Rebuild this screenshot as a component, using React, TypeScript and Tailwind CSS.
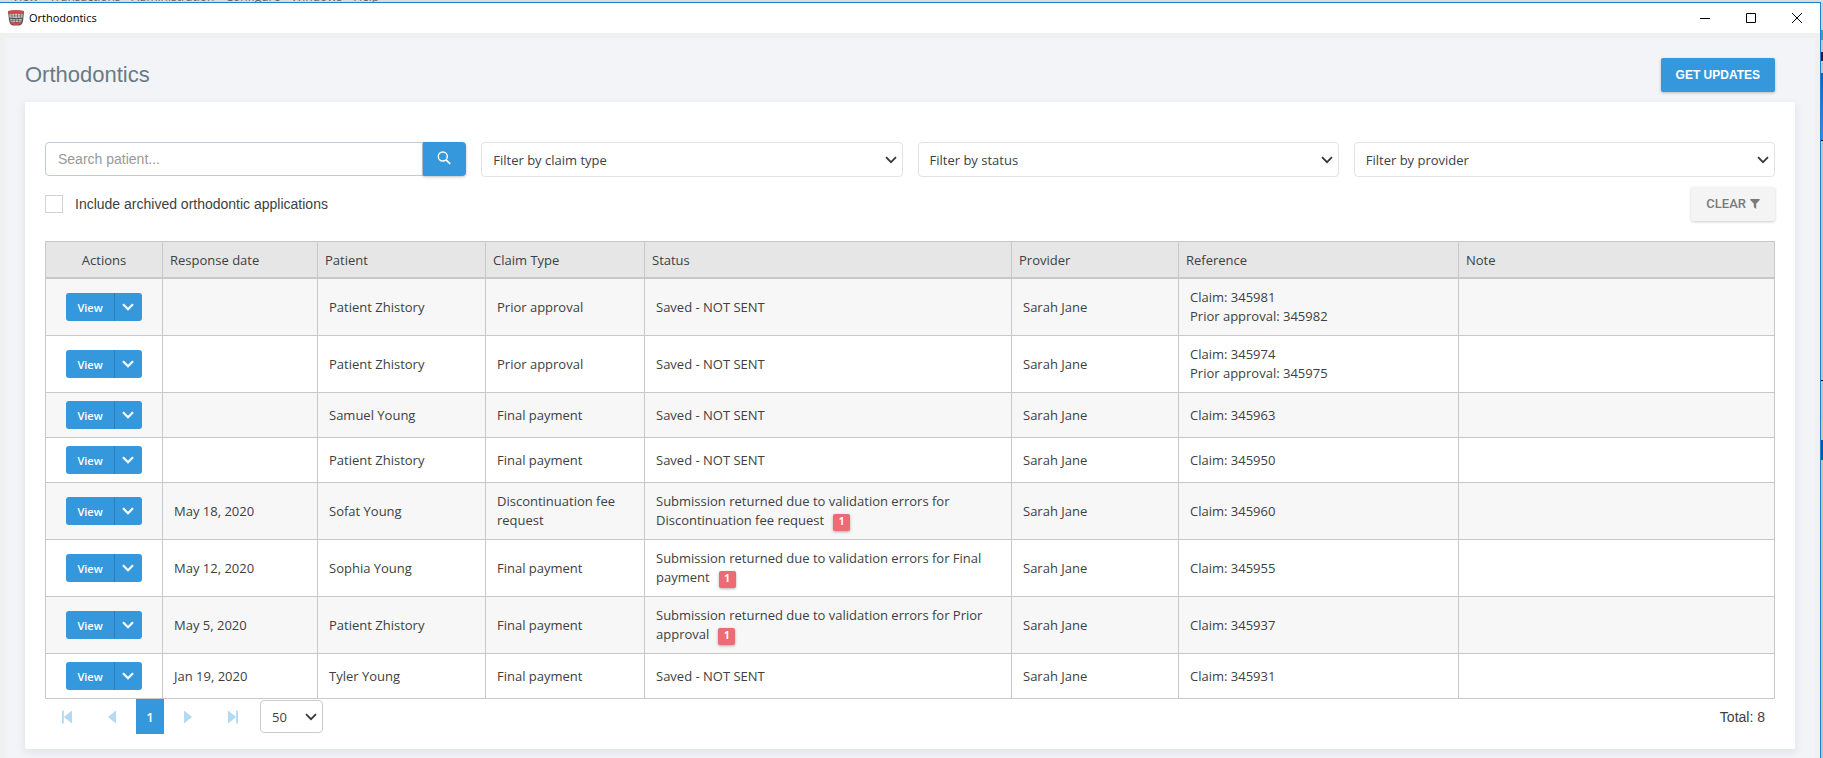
import type { ReactNode } from "react";

type Row = {
  date: string;
  patient: string;
  claim: string;
  status: string;
  errors?: number;
  reference: string[];
};

const rows: Row[] = [
  { date: "", patient: "Patient Zhistory", claim: "Prior approval", status: "Saved - NOT SENT", reference: ["Claim: 345981", "Prior approval: 345982"] },
  { date: "", patient: "Patient Zhistory", claim: "Prior approval", status: "Saved - NOT SENT", reference: ["Claim: 345974", "Prior approval: 345975"] },
  { date: "", patient: "Samuel Young", claim: "Final payment", status: "Saved - NOT SENT", reference: ["Claim: 345963"] },
  { date: "", patient: "Patient Zhistory", claim: "Final payment", status: "Saved - NOT SENT", reference: ["Claim: 345950"] },
  { date: "May 18, 2020", patient: "Sofat Young", claim: "Discontinuation fee request", status: "Submission returned due to validation errors for Discontinuation fee request", errors: 1, reference: ["Claim: 345960"] },
  { date: "May 12, 2020", patient: "Sophia Young", claim: "Final payment", status: "Submission returned due to validation errors for Final payment", errors: 1, reference: ["Claim: 345955"] },
  { date: "May 5, 2020", patient: "Patient Zhistory", claim: "Final payment", status: "Submission returned due to validation errors for Prior approval", errors: 1, reference: ["Claim: 345937"] },
  { date: "Jan 19, 2020", patient: "Tyler Young", claim: "Final payment", status: "Saved - NOT SENT", reference: ["Claim: 345931"] },
];

const headers = [
  { label: "Actions", className: "w-[117px] text-center" },
  { label: "Response date", className: "w-[155px] text-left" },
  { label: "Patient", className: "w-[168px] text-left" },
  { label: "Claim Type", className: "w-[159px] text-left" },
  { label: "Status", className: "w-[367px] text-left" },
  { label: "Provider", className: "w-[167px] text-left" },
  { label: "Reference", className: "w-[280px] text-left" },
  { label: "Note", className: "text-left" },
];

const menus = ["View", "Transactions", "Administration", "Configure", "Windows", "Help"];

function Chevron({ className }: { className: string }) {
  return (
    <svg viewBox="0 0 12 8" className={className} fill="none" stroke="currentColor" aria-hidden="true">
      <path d="M1 1.2 6 6.2l5-5" />
    </svg>
  );
}

function AppIcon() {
  return (
    <svg viewBox="0 0 16 16" className="h-4 w-4" aria-hidden="true">
      <path d="M0 1Q8-.5 16 1l-.8 9q-.7 5-4 5.500H5Q1.700 15 1 10Z" fill="#57504f" />
      <path d="M.2.900Q8-.5 15.800.900V4.500Q8 2.800.4 4.500Z" fill="#d8464c" />
      <path d="M2.200 11.500q6 2 11.600 0l-1 2.500Q8 15.800 3.200 14Z" fill="#cf4e54" />
      <path d="M1 4.500Q8 3 15 4.500L14.500 7.500Q8 8.300 1.500 7.500Z" fill="#d5d2d0" />
      <path d="M2 8.800q6 .8 12 0l-.5 2.700q-5.500 1.200-11 0Z" fill="#c9c5c3" />
      <path d="M4 4v3.500M6.700 3.700v4M9.500 3.700v4M12.300 4v3.500M4.700 9v2.500M7.500 9.300V12M10.500 9.300V12" stroke="#4a4646" strokeWidth=".6" />
      <path d="M1 5.900h14M2 10.300h12" stroke="#5e5756" strokeWidth=".6" />
    </svg>
  );
}

function Filter({ id, label }: { id: string; label: string }) {
  return (
    <div className="relative">
      <select id={id} aria-label={label} className="block h-[35px] w-full appearance-none rounded border border-[#e2e3e6] bg-white pt-0.5 pr-8 pl-[11px] font-['Open_Sans',sans-serif] text-[13px] text-[#3c3f43]">
        <option>{label}</option>
      </select>
      <Chevron className="pointer-events-none absolute top-[14px] right-[6px] h-2 w-3 stroke-[1.7] text-[#33373c]" />
    </div>
  );
}

function PageButton({ label, children }: { label: string; children: ReactNode }) {
  return (
    <button type="button" aria-label={label} className="flex h-[34px] w-7 items-center justify-center text-[#b3d9f3]">
      {children}
    </button>
  );
}

function Backdrop() {
  return (
    <div className="flex w-[2px] shrink-0 flex-col overflow-hidden bg-[#c3c3c3]" aria-hidden="true">
      <div className="h-[28px] bg-[#d2d2d2]" />
      <div className="h-[10px] bg-[#3aa3a3]" />
      <div className="h-[12px] bg-[#c8c8c8]" />
      <div className="h-[9px] bg-[#3c1030]" />
      <div className="h-[12px] bg-[#c8c8c8]" />
      <div className="h-[67px] bg-linear-to-b from-[#0a62c8] to-[#4488dc]" />
      <div className="h-px bg-black" />
      <div className="h-[239px]" />
      <div className="h-px bg-black" />
      <div className="h-[39px]" />
      <div className="h-[20px] bg-[#cfca98]" />
      <div className="h-[20px] bg-[#0058ac]" />
      {[0, 1, 2, 3, 4, 5, 6].map((n) => (
        <div key={n} className="shrink-0">
          <div className="h-[20px] bg-[#cbc898]" />
          <div className="h-[20px] bg-[#c3c3c3]" />
        </div>
      ))}
    </div>
  );
}

export default function App() {
  return (
    <div className="flex min-h-screen flex-col bg-[#dcdcdc] font-['Liberation_Sans',Arial,sans-serif] text-sm text-[#3c3f43]">
      <div className="flex h-[2px] items-end gap-[11px] overflow-hidden pl-3 font-['Open_Sans',sans-serif] text-xs leading-[11px] text-[#666]" aria-hidden="true">
        {menus.map((m) => (
          <span key={m}>{m}</span>
        ))}
      </div>
      <div className="flex flex-1">
        <div className="flex min-w-0 flex-1 flex-col border-t border-r border-[#1a80d2] bg-[#f0f0f0]">
          <header className="flex h-[30px] items-center bg-white pl-2">
            <AppIcon />
            <span className="ml-[5px] flex-1 font-['Open_Sans',sans-serif] text-[11px] text-black">Orthodontics</span>
            <button type="button" aria-label="Minimize" className="flex h-[30px] w-[46px] items-center justify-center">
              <svg viewBox="0 0 10 10" className="h-[10px] w-[10px]" stroke="#000" fill="none"><path d="M0 5.500h10" /></svg>
            </button>
            <button type="button" aria-label="Maximize" className="flex h-[30px] w-[46px] items-center justify-center">
              <svg viewBox="0 0 10 10" className="h-[10px] w-[10px]" stroke="#000" fill="none"><path d="M.5.5h9v9h-9z" /></svg>
            </button>
            <button type="button" aria-label="Close" className="flex h-[30px] w-[46px] items-center justify-center">
              <svg viewBox="0 0 10 10" className="h-[10px] w-[10px]" stroke="#000" fill="none"><path d="M0 0l10 10M10 0 0 10" /></svg>
            </button>
          </header>

          <main className="mx-[5px] mt-[5px] flex-1 bg-[#f2f4f8] px-5 pb-[9px]">
            <div className="flex h-16 items-start justify-between pr-5 pt-5">
              <h1 className="text-[22px] leading-[34px] text-[#6b7a85]">Orthodontics</h1>
              <button type="button" className="h-[34px] rounded-[2px] bg-[#3598dc] px-[15px] text-xs font-bold text-white shadow-[0_1px_3px_rgba(0,0,0,0.25)]">GET UPDATES</button>
            </div>

            <section className="rounded-[2px] bg-white px-5 pt-10 pb-[15px] shadow-[0_3px_6px_2px_rgba(60,70,100,0.07)]">
              <div className="grid grid-cols-4 gap-[15px]">
                <div className="flex h-[34px]">
                  <input type="text" aria-label="Search patient" placeholder="Search patient..." className="min-w-0 flex-1 rounded-l border border-[#c2cad8] bg-white px-3 text-sm placeholder:text-[#999]" />
                  <button type="button" aria-label="Search" className="flex w-[43px] justify-center rounded-r bg-[#3598dc] pt-[9px] pr-[2px] text-white shadow-[0_1px_3px_rgba(0,0,0,0.25)]">
                    <svg viewBox="0 0 14 14" className="h-[14px] w-[14px]" fill="none" stroke="currentColor" aria-hidden="true">
                      <circle cx="5.800" cy="5.500" r="4.500" strokeWidth="1.400" />
                      <path d="m9 8.800 4.200 4" strokeWidth="1.800" />
                    </svg>
                  </button>
                </div>
                <Filter id="claim-type" label="Filter by claim type" />
                <Filter id="status" label="Filter by status" />
                <Filter id="provider" label="Filter by provider" />
              </div>

              <div className="mt-[10px] flex h-[34px] items-center justify-between">
                <label className="flex items-center gap-3">
                  <input type="checkbox" className="h-[18px] w-[18px] appearance-none border border-[#d2d2d2] bg-white" />
                  Include archived orthodontic applications
                </label>
                <button type="button" className="flex h-[34px] items-center gap-1 rounded-[2px] bg-[#f4f4f4] px-[15px] font-[Roboto,sans-serif] text-[13px] font-medium text-[#7a7a7a] shadow-[0_1px_3px_rgba(0,0,0,0.2)]">
                  CLEAR
                  <svg viewBox="0 0 10 10" className="h-[10px] w-[10px]" fill="currentColor" aria-hidden="true"><path d="M.3 0h9.400v1L6.200 4.800V10L3.800 8V4.800L.3 1z" /></svg>
                </button>
              </div>

              <table className="mt-5 w-full table-fixed border-separate border-spacing-0 border-t border-l border-[#c8c8c8] font-['Open_Sans',sans-serif] text-[13px] leading-[19px]">
                <thead>
                  <tr className="h-[37px] bg-[#e6e6e6]">
                    {headers.map((h) => (
                      <th key={h.label} scope="col" className={`border-r border-b-2 border-[#c8c8c8] px-[7px] pt-0.5 font-normal ${h.className}`}>{h.label}</th>
                    ))}
                  </tr>
                </thead>
                <tbody>
                  {rows.map((r, i) => (
                    <tr key={i} className="h-[45px] odd:bg-[#f7f7f7] *:border-r *:border-b *:border-[#c8c8c8] *:px-[11px] *:py-[9px] *:first:py-2">
                      <td>
                        <div className="flex justify-center text-[11px] font-semibold text-white">
                          <button type="button" className="h-7 w-12 rounded-l-[3px] bg-[#3598dc]">View</button>
                          <button type="button" aria-label="More actions" className="flex h-7 w-7 items-center justify-center rounded-r-[3px] border-l border-[#2780bd] bg-[#3598dc] pr-[2px]">
                            <Chevron className="h-2 w-3 stroke-[2.2]" />
                          </button>
                        </div>
                      </td>
                      <td>{r.date}</td>
                      <td>{r.patient}</td>
                      <td>{r.claim}</td>
                      <td>
                        {r.status}
                        {r.errors && (
                          <span className="-mt-1 -mb-1 ml-[9px] inline-block h-[17px] w-[17px] rounded-[2px] bg-[#ed6b75] text-center text-[10px] leading-[15px] font-bold text-white shadow-[0_1px_3px_rgba(0,0,0,0.3)]">{r.errors}</span>
                        )}
                      </td>
                      <td>Sarah Jane</td>
                      <td>{r.reference.map((line) => <div key={line}>{line}</div>)}</td>
                      <td />
                    </tr>
                  ))}
                </tbody>
              </table>

              <div className="flex h-[35px] items-center pl-2">
                <PageButton label="First page">
                  <svg viewBox="0 0 10 14" className="h-[14px] w-[10px]" fill="currentColor"><path d="M0 .5h1.800v13H0zM10 .5v13L1.800 7z" /></svg>
                </PageButton>
                <span className="w-[17px]" />
                <PageButton label="Previous page">
                  <svg viewBox="0 0 8 14" className="h-[14px] w-2" fill="currentColor"><path d="M8 .5v13L0 7z" /></svg>
                </PageButton>
                <button type="button" aria-current="page" className="ml-[10px] h-[35px] w-7 bg-[#3598dc] pt-0.5 font-['Open_Sans',sans-serif] text-[13px] font-semibold text-white">1</button>
                <span className="w-[10px]" />
                <PageButton label="Next page">
                  <svg viewBox="0 0 8 14" className="h-[14px] w-2" fill="currentColor"><path d="M0 .5v13L8 7z" /></svg>
                </PageButton>
                <span className="w-[17px]" />
                <PageButton label="Last page">
                  <svg viewBox="0 0 10 14" className="h-[14px] w-[10px]" fill="currentColor"><path d="M8.200 .5h1.800v13H8.200zM0 .5v13L8.200 7z" /></svg>
                </PageButton>
                <div className="relative ml-[13px]">
                  <select aria-label="Rows per page" className="block h-[33px] w-[63px] appearance-none rounded border border-[#c9cdd2] bg-white pt-0.5 pl-[11px] font-['Open_Sans',sans-serif] text-[13px]">
                    <option>50</option>
                  </select>
                  <Chevron className="pointer-events-none absolute top-[13px] right-[6px] h-2 w-3 stroke-[1.7] text-[#33373c]" />
                </div>
                <span className="ml-auto pr-[10px]">Total: 8</span>
              </div>
            </section>
          </main>
        </div>
        <Backdrop />
      </div>
    </div>
  );
}
